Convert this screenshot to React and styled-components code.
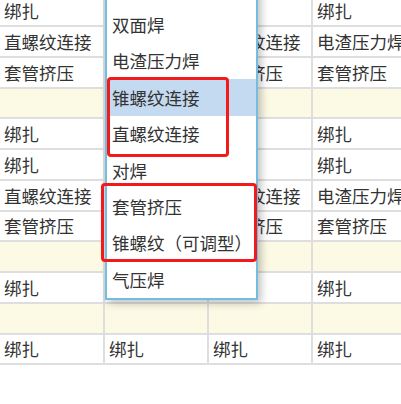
import styled, { createGlobalStyle } from "styled-components";

const GlobalStyle = createGlobalStyle`
  body {
    margin: 0;
    background: #ffffff;
    font-family: "Noto Sans CJK SC", "Noto Sans", sans-serif;
  }
`;

const Page = styled.div`
  position: relative;
  width: 401px;
  height: 404px;
  overflow: hidden;
  background: #ffffff;
`;

const Table = styled.div`
  display: flex;
  flex-direction: column;
  margin-top: -3.75px;
`;

const Row = styled.div`
  display: grid;
  grid-template-columns: 105px 104px 104px 1fr;
  height: 30.75px;
  box-sizing: border-box;
  border-bottom: 2px solid #dedede;
  background: ${(p) => (p.$blank ? "#fcf9e5" : "#ffffff")};
`;

const Cell = styled.div`
  display: flex;
  align-items: center;
  box-sizing: border-box;
  padding-left: 4px;
  border-right: 2px solid #dedede;
  font-size: 17.5px;
  color: #333333;
  white-space: nowrap;
  overflow: hidden;
  &:last-child {
    border-right: none;
  }
`;

const Dropdown = styled.ul`
  position: absolute;
  left: 105px;
  top: -32px;
  width: 153px;
  margin: 0;
  padding: 0;
  list-style: none;
  box-sizing: border-box;
  border: 2px solid #74bde0;
  background: #ffffff;
  box-shadow: 3px 3px 8px rgba(0, 0, 0, 0.25);
`;

const Option = styled.li`
  display: flex;
  align-items: center;
  height: 36.4px;
  padding-left: 5px;
  font-size: 17.5px;
  color: #333333;
  white-space: nowrap;
  background: ${(p) => (p.$active ? "#c4daf0" : "transparent")};
`;

const Mark = styled.div`
  position: absolute;
  left: ${(p) => p.$x}px;
  top: ${(p) => p.$y}px;
  width: ${(p) => p.$w}px;
  height: ${(p) => p.$h}px;
  box-sizing: border-box;
  border: 3px solid #f21a1a;
  border-radius: 4px;
  pointer-events: none;
`;

// cells hidden under the open dropdown are left empty
const rows = [
  ["绑扎", "", "", "绑扎"],
  ["直螺纹连接", "", "直螺纹连接", "电渣压力焊"],
  ["套管挤压", "", "套管挤压", "套管挤压"],
  null,
  ["绑扎", "", "", "绑扎"],
  ["绑扎", "", "", "绑扎"],
  ["直螺纹连接", "", "直螺纹连接", "电渣压力焊"],
  ["套管挤压", "", "套管挤压", "套管挤压"],
  null,
  ["绑扎", "", "", "绑扎"],
  null,
  ["绑扎", "绑扎", "绑扎", "绑扎"],
];

const options = [
  "绑扎",
  "双面焊",
  "电渣压力焊",
  "锥螺纹连接",
  "直螺纹连接",
  "对焊",
  "套管挤压",
  "锥螺纹（可调型）",
  "气压焊",
];

export default function App() {
  return (
    <Page>
      <GlobalStyle />
      <Table>
        {rows.map((cells, i) => (
          <Row key={i} $blank={!cells}>
            {(cells || ["", "", "", ""]).map((text, j) => (
              <Cell key={j}>{text}</Cell>
            ))}
          </Row>
        ))}
      </Table>
      <Dropdown>
        {options.map((opt) => (
          <Option key={opt} $active={opt === "锥螺纹连接"}>
            {opt}
          </Option>
        ))}
      </Dropdown>
      <Mark $x={107} $y={77} $w={122} $h={80} />
      <Mark $x={101} $y={183} $w={156} $h={79} />
    </Page>
  );
}
